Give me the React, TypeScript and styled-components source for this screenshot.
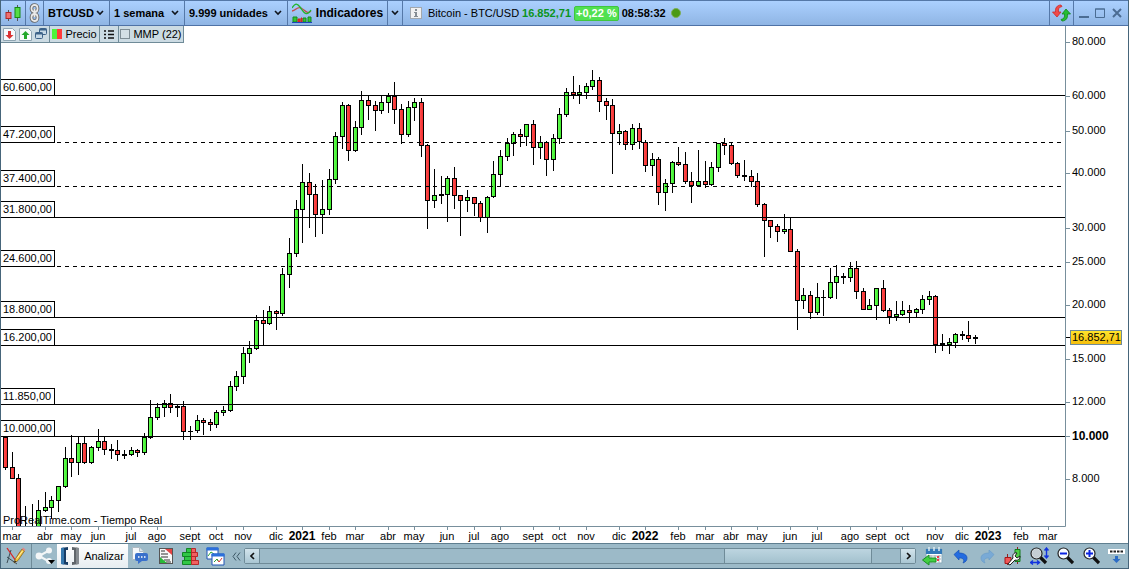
import React from "react";
import styled, { createGlobalStyle, css } from "styled-components";

const GlobalStyle = createGlobalStyle`
  * { box-sizing: border-box; }
  body { margin: 0; background: #fff; }
  body, button, select, input { font-family: "Liberation Sans", Arial, sans-serif; font-size: 11px; color: #000; }
`;

const Window = styled.main`
  display: flex;
  flex-direction: column;
  height: 100vh;
  min-width: 900px;
  border: solid #46657a;
  border-width: 0 1px 1px;
  background: #fff;
`;

const TopBar = styled.header`
  display: flex;
  flex: none;
  height: 26px;
  border-top: 1px solid #5578a8;
  border-bottom: 1px solid #4f72a6;
  background: linear-gradient(#abd0ff, #8fb5e4);
`;

const cell = css`
  display: flex;
  align-items: center;
  justify-content: center;
  flex: none;
  margin: 0;
  padding: 0;
  border: 0;
  background: none;
`;

const TopButton = styled.button<{ $width: number; $plain?: boolean; $large?: boolean }>`
  ${cell}
  width: ${(p) => p.$width}px;
  gap: 4px;
  border-right: ${(p) => (p.$plain ? "0" : "1px solid #5578a8")};
  font-weight: bold;
  font-size: ${(p) => (p.$large ? 12 : 11)}px;
`;

const Picker = styled.label<{ $width: number }>`
  display: grid;
  flex: none;
  align-items: center;
  width: ${(p) => p.$width}px;
  border-right: 1px solid #5578a8;
  > * { grid-area: 1 / 1; }
  > svg { justify-self: end; margin-right: 5px; pointer-events: none; }
`;

const PickerSelect = styled.select`
  appearance: none;
  width: 100%;
  height: 24px;
  padding: 0 0 0 4px;
  border: 0;
  background: none;
  font-weight: bold;
`;

const Quote = styled.div`
  display: flex;
  align-items: center;
  flex: 1;
  gap: 3px;
  padding-left: 7px;
  white-space: nowrap;
`;

const QuoteName = styled.span`
  padding-left: 3px;
`;

const QuotePrice = styled.strong`
  color: #0b9420;
`;

const QuoteChange = styled.strong`
  padding: 0 1px;
  border: 1px solid #3fc63f;
  border-radius: 2px;
  background: #51e151;
  color: #fff;
  line-height: 13px;
`;

const StatusDot = styled.span`
  width: 10px;
  height: 10px;
  margin-left: 2px;
  border: 1px solid #7fae5c;
  border-radius: 50%;
  background: #4b9a16;
`;

const WindowTools = styled.div`
  display: flex;
  border-left: 1px solid #5578a8;
`;

const ChartArea = styled.section`
  position: relative;
  flex: 1;
  min-height: 0;
`;

const ChartSvg = styled.svg`
  display: block;
  width: 100%;
  height: 100%;
  font-family: "Liberation Sans", Arial, sans-serif;
  font-size: 11px;
`;

const Legend = styled.div`
  position: absolute;
  top: 0;
  left: 0;
  display: flex;
  height: 17px;
  border-bottom: 1px solid #6f8b98;
  background: #ccdbe3;
`;

const LegendGroup = styled.div<{ $width: number }>`
  display: flex;
  align-items: center;
  justify-content: center;
  width: ${(p) => p.$width}px;
  border-right: 1px solid #6f8b98;
`;

const LegendButton = styled.button`
  ${cell}
  width: 16px;
`;

const LegendLabel = styled.label`
  display: flex;
  align-items: center;
  gap: 3px;
  white-space: nowrap;
`;

const LegendCheck = styled.input`
  appearance: none;
  width: 10px;
  height: 10px;
  margin: 0;
  border: 1px solid #7e8d95;
  background: #d3dfe5;
`;

const Swatch = styled.span`
  width: 10px;
  height: 10px;
  background: linear-gradient(90deg, #4cf53a 50%, #ff3a3a 50%);
`;

const BottomBar = styled.footer`
  display: flex;
  flex: none;
  align-items: center;
  height: 25px;
  border-top: 1px solid #5f7f90;
  background: #9cbac8;
`;

const BarButton = styled.button<{ $width: number; $divided?: boolean }>`
  ${cell}
  width: ${(p) => p.$width}px;
  height: 24px;
  border-right: ${(p) => (p.$divided ? "1px solid #6f8b98" : "0")};
`;

const AnalyzeButton = styled.button`
  ${cell}
  width: 71px;
  height: 24px;
  gap: 5px;
  background: linear-gradient(#fff, #e6edf1);
`;

const ScrollBar = styled.div`
  display: flex;
  flex: 1;
  min-width: 0;
  height: 16px;
  border: 1px solid #6f8b98;
  border-radius: 2px;
`;

const ScrollArrow = styled.button`
  ${cell}
  width: 14px;
  background: linear-gradient(#d2e4ec, #a9c6d3);
`;

const ScrollRange = styled.input`
  appearance: none;
  flex: 1;
  min-width: 0;
  height: 14px;
  margin: 0;
  border: solid #6f8b98;
  border-width: 0 1px;
  background: #9cbac8;
  &::-webkit-slider-thumb {
    appearance: none;
    width: 148px;
    height: 14px;
    border: solid #6f8b98;
    border-width: 0 1px;
    background: linear-gradient(#bdd5e0, #a3c1ce);
  }
`;

type Kind = "u" | "d" | "x";
type Candle = [x: number, high: number, top: number, bottom: number, low: number, kind: Kind];

// Weekly candles: "u" rises, "d" falls, "x" closes where it opened.
const candles: Candle[] = [
  [5, 436, 437, 467, 469, "d"], [12, 452, 467, 478, 478, "d"], [18, 474, 478, 540, 540, "d"],
  [25, 506, 530, 540, 540, "u"], [32, 504, 530, 540, 540, "d"], [38, 500, 510, 540, 540, "u"],
  [45, 492, 507, 510, 511, "u"], [51, 496, 500, 507, 518, "u"], [58, 486, 486, 500, 511, "u"],
  [65, 447, 458, 486, 487, "u"], [71, 435, 458, 462, 476, "d"], [78, 437, 443, 462, 474, "u"],
  [84, 437, 443, 462, 463, "d"], [91, 446, 447, 462, 463, "u"], [98, 429, 441, 447, 450, "u"],
  [104, 437, 441, 449, 454, "d"], [111, 444, 449, 450, 458, "x"], [117, 440, 450, 454, 460, "d"],
  [124, 450, 454, 455, 458, "x"], [131, 447, 450, 454, 455, "u"], [137, 449, 450, 452, 456, "d"],
  [144, 433, 437, 452, 454, "u"], [150, 400, 417, 437, 438, "u"], [157, 403, 407, 417, 419, "u"],
  [164, 400, 403, 407, 416, "u"], [170, 394, 403, 407, 412, "d"], [177, 404, 406, 407, 416, "x"],
  [183, 401, 406, 431, 439, "d"], [190, 426, 431, 431, 439, "x"], [197, 415, 420, 430, 432, "u"],
  [203, 418, 420, 422, 434, "d"], [210, 419, 422, 424, 430, "d"], [216, 410, 412, 424, 427, "u"],
  [223, 406, 410, 412, 415, "u"], [230, 381, 386, 410, 411, "u"], [236, 371, 376, 386, 390, "u"],
  [243, 347, 353, 376, 383, "u"], [249, 341, 348, 353, 362, "u"], [256, 315, 320, 348, 349, "u"],
  [263, 310, 320, 323, 344, "d"], [269, 306, 311, 323, 324, "u"], [276, 310, 311, 313, 329, "d"],
  [282, 268, 274, 313, 315, "u"], [289, 238, 253, 274, 287, "u"], [296, 200, 209, 253, 256, "u"],
  [302, 164, 182, 209, 242, "u"], [309, 173, 182, 194, 227, "d"], [315, 184, 194, 214, 236, "d"],
  [322, 180, 209, 214, 233, "u"], [329, 169, 179, 209, 214, "u"], [335, 132, 136, 179, 183, "u"],
  [342, 102, 105, 136, 148, "u"], [348, 104, 105, 150, 160, "d"], [355, 121, 127, 150, 151, "u"],
  [361, 91, 100, 127, 134, "u"], [368, 96, 100, 105, 119, "d"], [375, 101, 105, 110, 130, "d"],
  [381, 96, 102, 110, 113, "u"], [388, 93, 96, 102, 112, "u"], [394, 82, 96, 109, 123, "d"],
  [401, 104, 109, 134, 143, "d"], [408, 101, 107, 134, 136, "u"], [414, 98, 102, 107, 120, "u"],
  [421, 98, 102, 145, 156, "d"], [427, 144, 145, 200, 228, "d"], [434, 169, 195, 200, 207, "u"],
  [441, 176, 194, 195, 203, "x"], [447, 176, 178, 194, 221, "u"], [454, 167, 178, 195, 208, "d"],
  [460, 195, 195, 200, 235, "d"], [467, 190, 197, 200, 211, "u"], [474, 197, 197, 203, 215, "d"],
  [480, 201, 203, 217, 221, "d"], [487, 196, 197, 217, 232, "u"], [493, 161, 174, 196, 197, "u"],
  [500, 150, 156, 174, 186, "u"], [507, 138, 143, 156, 160, "u"], [513, 132, 134, 143, 155, "u"],
  [520, 129, 134, 136, 146, "d"], [526, 124, 124, 136, 145, "u"], [533, 120, 124, 147, 164, "d"],
  [540, 136, 142, 147, 158, "u"], [546, 141, 142, 159, 175, "d"], [553, 134, 138, 159, 170, "u"],
  [559, 108, 114, 138, 143, "u"], [566, 88, 92, 114, 116, "u"], [573, 76, 92, 94, 98, "d"],
  [579, 85, 92, 94, 103, "u"], [586, 83, 86, 92, 98, "u"], [592, 70, 80, 86, 89, "u"],
  [599, 77, 80, 101, 111, "d"], [606, 98, 101, 105, 119, "d"], [612, 99, 105, 133, 173, "d"],
  [619, 124, 131, 133, 144, "u"], [625, 130, 131, 144, 149, "d"], [632, 124, 128, 144, 149, "u"],
  [639, 123, 128, 141, 148, "d"], [645, 140, 142, 165, 171, "d"], [652, 153, 159, 165, 175, "u"],
  [658, 157, 159, 192, 204, "d"], [665, 179, 183, 192, 210, "u"], [672, 161, 162, 183, 192, "u"],
  [678, 147, 162, 164, 165, "d"], [685, 152, 164, 181, 183, "d"], [691, 172, 181, 185, 202, "d"],
  [698, 150, 181, 185, 186, "u"], [705, 161, 181, 184, 187, "d"], [711, 162, 167, 184, 185, "u"],
  [718, 143, 143, 167, 171, "u"], [724, 138, 143, 145, 154, "d"], [731, 143, 145, 163, 164, "d"],
  [737, 162, 163, 175, 177, "d"], [744, 160, 175, 176, 180, "x"], [751, 170, 176, 181, 186, "d"],
  [757, 173, 181, 204, 206, "d"], [764, 203, 204, 220, 256, "d"], [770, 220, 220, 226, 237, "d"],
  [777, 224, 226, 231, 241, "d"], [784, 214, 229, 231, 233, "u"], [790, 217, 229, 251, 251, "d"],
  [797, 249, 251, 300, 329, "d"], [803, 288, 295, 300, 308, "u"], [810, 291, 295, 312, 318, "d"],
  [817, 283, 297, 312, 314, "u"], [823, 290, 297, 297, 315, "x"], [830, 268, 282, 297, 298, "u"],
  [836, 265, 276, 282, 298, "u"], [843, 273, 276, 277, 283, "x"], [850, 262, 268, 277, 281, "u"],
  [856, 261, 268, 291, 298, "d"], [863, 288, 291, 309, 309, "d"], [869, 299, 305, 309, 309, "u"],
  [876, 288, 288, 305, 319, "u"], [883, 280, 288, 310, 311, "d"], [889, 308, 310, 316, 323, "d"],
  [896, 301, 314, 316, 320, "u"], [902, 301, 310, 314, 315, "u"], [909, 305, 310, 312, 322, "d"],
  [916, 308, 309, 312, 316, "u"], [922, 295, 299, 309, 313, "u"], [929, 291, 296, 299, 304, "u"],
  [935, 295, 296, 344, 352, "d"], [942, 334, 343, 344, 350, "x"], [949, 338, 342, 344, 353, "u"],
  [955, 333, 334, 342, 347, "u"], [962, 331, 334, 335, 339, "x"], [968, 321, 335, 338, 341, "d"],
  [975, 335, 337, 338, 343, "x"],
];

const levels: { y: number; label: string; dashed?: boolean }[] = [
  { y: 95, label: "60.600,00" },
  { y: 142, label: "47.200,00", dashed: true },
  { y: 186, label: "37.400,00", dashed: true },
  { y: 217, label: "31.800,00" },
  { y: 266, label: "24.600,00", dashed: true },
  { y: 317, label: "18.800,00" },
  { y: 345, label: "16.200,00" },
  { y: 404, label: "11.850,00" },
  { y: 436, label: "10.000,00" },
];

const prices: [number, string][] = [
  [42, "80.000"], [96, "60.000"], [131, "50.000"], [173, "40.000"], [228, "30.000"], [262, "25.000"],
  [305, "20.000"], [359, "15.000"], [402, "12.000"], [436, "10.000"], [479, "8.000"],
];

const months: [number, string][] = [
  [12, "mar"], [45, "abr"], [71, "may"], [98, "jun"], [131, "jul"], [157, "ago"], [190, "sept"],
  [216, "oct"], [243, "nov"], [276, "dic"], [302, "2021"], [329, "feb"], [355, "mar"], [388, "abr"],
  [414, "may"], [447, "jun"], [474, "jul"], [500, "ago"], [533, "sept"], [559, "oct"], [586, "nov"],
  [619, "dic"], [645, "2022"], [678, "feb"], [705, "mar"], [731, "abr"], [757, "may"], [790, "jun"],
  [817, "jul"], [850, "ago"], [876, "sept"], [902, "oct"], [935, "nov"], [962, "dic"], [988, "2023"],
  [1021, "feb"], [1048, "mar"],
];

function Chart() {
  return (
    <ChartSvg viewBox="1 26 1127 517" role="img" aria-label="Bitcoin - BTC/USD">
      <defs>
        <linearGradient id="up"><stop offset="0" stopColor="#66ff55" /><stop offset="1" stopColor="#3ceb28" /></linearGradient>
        <linearGradient id="down"><stop offset="0" stopColor="#ff4d4d" /><stop offset="1" stopColor="#f22f2f" /></linearGradient>
        <linearGradient id="last" x2="0" y2="1"><stop offset="0" stopColor="#ffe62e" /><stop offset="1" stopColor="#f5bd0a" /></linearGradient>
        <clipPath id="plot"><rect x="1" y="26" width="1064" height="500" /></clipPath>
      </defs>
      <g clipPath="url(#plot)" shapeRendering="crispEdges">
        {candles.map(([x, high, top, bottom, low, kind]) => (
          <g key={x}>
            <rect x={x} y={high} width="1" height={low - high + 1} />
            <rect x={x - 2} y={top} width="5" height={bottom - top + 1} />
            {kind !== "x" && (
              <rect x={x - 1} y={top + 1} width="3" height={bottom - top - 1} fill={kind === "u" ? "url(#up)" : "url(#down)"} />
            )}
          </g>
        ))}
      </g>
      {levels.map((l) => (
        <g key={l.y}>
          <path d={`M${l.dashed ? 57 : 1} ${l.y + 0.5}H1065`} stroke="#000" strokeDasharray={l.dashed ? "4 4" : undefined} />
          <rect x="0.5" y={l.y - 15.5} width="54" height="16" fill="#fff" stroke="#000" />
          <text x="3" y={l.y - 4}>{l.label}</text>
        </g>
      ))}
      <text x="3" y="524">ProRealTime.com - Tiempo Real</text>
      <path d="M1 526.5H1065.5V26" fill="none" stroke="#788f9c" />
      {prices.map(([y, label]) => {
        const main = label === "10.000";
        return (
          <g key={y}>
            <path d={`M1066 ${y + 0.5}h4`} stroke="#788f9c" />
            <text x="1072" y={y + (main ? 4 : 3)} fontSize={main ? 12 : 11} fontWeight={main ? "bold" : "normal"}>{label}</text>
          </g>
        );
      })}
      <path d="M1066 337.5h4" stroke="#000" />
      <rect x="1070.5" y="330.5" width="51" height="14" fill="url(#last)" stroke="#6f8b98" />
      <text x="1072" y="341">16.852,71</text>
      {months.map(([x, label]) => {
        const year = label.startsWith("20");
        return (
          <g key={x}>
            <path d={`M${x + 0.5} 527v3`} stroke="#788f9c" />
            <text x={x} y="540" textAnchor="middle" fontSize={year ? 12 : 11} fontWeight={year ? "bold" : "normal"}>{label}</text>
          </g>
        );
      })}
    </ChartSvg>
  );
}

const Chevron = () => (
  <svg width="8" height="6" viewBox="0 0 8 6"><path d="M1 1l3 3 3-3" fill="none" stroke="#10151c" strokeWidth="1.6" /></svg>
);

const CandlesIcon = () => (
  <svg width="17" height="18" viewBox="0 0 17 18">
    <path d="M3.500 6v11M12.500 1v16" stroke="#555" />
    <rect x="1" y="8.500" width="5" height="6" fill="#f07070" stroke="#b02828" />
    <rect x="10" y="3.500" width="5" height="10" fill="#55dd45" stroke="#168a16" />
  </svg>
);

const LinkIcon = () => (
  <svg width="11" height="20" viewBox="0 0 11 20" fill="none">
    <g stroke="#666" strokeWidth="3.600"><rect x="2.500" y="2" width="6" height="7" rx="3" /><rect x="2.500" y="11" width="6" height="7" rx="3" /><path d="M5.500 6v8" /></g>
    <g stroke="#e9e9e9" strokeWidth="1.800"><rect x="2.500" y="2" width="6" height="7" rx="3" /><rect x="2.500" y="11" width="6" height="7" rx="3" /><path d="M5.500 6v8" /></g>
  </svg>
);

const IndicatorIcon = () => (
  <svg width="20" height="20" viewBox="0 0 20 20" fill="none">
    <path d="M0 8C4 8 5 3 9 5s6 7 10 3" stroke="#c44b4b" strokeWidth="1.300" />
    <path d="M0 5C3 0 5 0 8 4s6 11 11 3" stroke="#21b52c" strokeWidth="1.300" />
    <path d="M1 14h4v5H1zM11 15h3v4h-3zM16 14h3v5h-3z" fill="#35c435" stroke="#138a20" />
    <path d="M6 16h2v3H6zM9 15h1v4H9z" fill="#e33" stroke="#c22" />
    <path d="M0 19.500h20" stroke="#1d46bb" />
  </svg>
);

const InfoIcon = () => (
  <svg width="12" height="12" viewBox="0 0 12 12">
    <rect x=".5" y=".5" width="11" height="11" fill="#f1f1f1" stroke="#a2a8ae" />
    <path d="M5 2h2v2H5zM4 5h3v4h1v1H4V9h1V6H4z" fill="#858c93" />
  </svg>
);

const SyncIcon = () => (
  <svg width="19" height="18" viewBox="0 0 19 18">
    <path d="M9 1C5 1 3 4 3.500 8H.5l4.500 5 4-5H6.500C6 5 7 3 10 2.500z" fill="#f04a4a" stroke="#c92b2b" strokeWidth=".8" />
    <path d="M10 17c4 0 6-3 5.500-7h3L14 5l-4 5h2.500c.5 3-.5 5-3.500 5.500z" fill="#25bd32" stroke="#12861c" strokeWidth=".8" />
  </svg>
);

const MinIcon = () => <svg width="10" height="12"><path d="M0 10h10" stroke="#4b6c93" strokeWidth="2" /></svg>;
const MaxIcon = () => <svg width="10" height="10"><path d="M.5 1h9v8.500h-9zM0 1h10" fill="none" stroke="#4b6c93" /></svg>;
const CloseIcon = () => <svg width="10" height="10"><path d="M1 1l8 8M9 1L1 9" stroke="#4b6c93" strokeWidth="2" /></svg>;

const SheetArrow = ({ up }: { up?: boolean }) => (
  <svg width="13" height="13" viewBox="0 0 13 13">
    <path d="M.5.5h9l3 3v9H.5z" fill="#f6fafc" stroke="#8fa5b2" />
    <path d={up ? "M5 11V7H2.500l4-4 4 4H8v4z" : "M5 3v4H2.500l4 4 4-4H8V3z"} fill={up ? "#22a72c" : "#d93232"} />
  </svg>
);

const CascadeIcon = () => (
  <svg width="12" height="12" viewBox="0 0 12 12" fill="#c6d9e7" stroke="#3c6288">
    <rect x="4.500" y=".5" width="7" height="6" rx="1" /><path d="M4.500 1.500h7" strokeWidth="2" />
    <rect x=".5" y="4.500" width="7" height="6" rx="1" /><path d="M.5 5.500h7" strokeWidth="2" />
  </svg>
);

const ListIcon = () => (
  <svg width="10" height="9"><path d="M0 1h2M0 4.500h2M0 8h2M4 1h6M4 4.500h6M4 8h6" stroke="#111" strokeWidth="1.400" /></svg>
);

const DrawIcon = () => (
  <svg width="20" height="18" viewBox="0 0 20 18" fill="none">
    <path d="M1 16L5 3M1 10l10 7" stroke="#3c4c55" />
    <path d="M1 1l9 13 4-9" stroke="#d92626" strokeWidth="1.300" />
    <path d="M8 16l1.500-4.500L16 2l2.500 2L12 13.500z" fill="#f2c43b" stroke="#85642a" strokeWidth=".8" />
    <path d="M16 2l1-1.500 2.500 2-1 1.500z" fill="#e68686" /><path d="M8 16l.8-2.400 1.500 1z" fill="#222" />
    <path d="M11 11.500L16.500 4" stroke="#fff2ae" />
  </svg>
);

const ShareIcon = () => (
  <svg width="20" height="18" viewBox="0 0 20 18">
    <path d="M14 3.500L4 9l10 5.500" fill="none" stroke="#f3f6f7" strokeWidth="2" />
    <g fill="#f3f6f7"><circle cx="14" cy="3.500" r="3" /><circle cx="4" cy="9" r="3.400" /><circle cx="14" cy="14" r="3" /></g>
    <path d="M13 13h7l-3.500 4z" fill="#000" />
  </svg>
);

const BracketIcon = () => (
  <svg width="18" height="18" viewBox="0 0 18 18">
    <path d="M0 1l7-1v3H5v12h2v3l-7-1z" fill="#173d66" /><path d="M0 1l3-.5v17L0 17z" fill="#3577ad" />
    <path d="M18 1l-7-1v3h2v12h-2v3l7-1z" fill="#5f656a" /><path d="M18 1l-3-.5v17l3-.5z" fill="#858b90" />
  </svg>
);

const ChatIcon = () => (
  <svg width="17" height="18" viewBox="0 0 17 18">
    <path d="M.5.500h7l4 4v8H.5z" fill="#f4f7fa" stroke="#aebac2" /><path d="M7.500.500v4h4" fill="#dbe4ea" stroke="#aebac2" />
    <path d="M5 6h9q2 0 2 2v4q0 2-2 2h-4l-4 3v-3H5q-2 0-2-2V8q0-2 2-2z" fill="#3a70cb" />
    <path d="M6 10h1.500M9 10h1.500M12 10h1.500" stroke="#fff" strokeWidth="1.500" />
  </svg>
);

const OrdersIcon = () => (
  <svg width="14" height="17" viewBox="0 0 14 17">
    <rect x=".5" y=".5" width="13" height="15" fill="#f8f8f8" stroke="#555" />
    <path d="M2 3h4M2 6h7M2 9h7M5 12h6M7 14h5" stroke="#333" />
    <path d="M6 1h7v6z" fill="#e54343" /><path d="M1 15V9l7 6z" fill="#28b938" />
  </svg>
);

const DepthIcon = () => (
  <svg width="17" height="17" viewBox="0 0 17 17">
    <g fill="#30c746" stroke="#128525"><path d="M4.500.5h5v4h-5zM.5 4.500h9v4h-9zM2.500 8.500h7v4h-7zM.5 12.500h9v4h-9z" /></g>
    <g fill="#f06161" stroke="#b62a2a"><path d="M9.500.5h4v4h-4zM9.500 4.500h6v4h-6zM9.500 8.500h4v4h-4zM9.500 12.500h7v4h-7z" /></g>
  </svg>
);

const WindowsIcon = () => (
  <svg width="19" height="19" viewBox="0 0 19 19" fill="none">
    <path d="M1 1h11v11H1z" fill="#fff" stroke="#1f55b5" /><path d="M.5 2h12" stroke="#2b6fdc" strokeWidth="3" />
    <path d="M2 9l3-4 3 2" stroke="#2aa336" />
    <path d="M6 7h12v11H6z" fill="#fff" stroke="#1f55b5" /><path d="M5.500 8h13" stroke="#2b6fdc" strokeWidth="3" />
    <path d="M8 15l3-3 2 3 3-4" stroke="#d93434" /><path d="M8 15l3-3 1 2" stroke="#2aa336" />
  </svg>
);

const CollapseIcon = () => <svg width="9" height="9"><path d="M4 .5l-3 4 3 4M8 .5l-3 4 3 4" fill="none" stroke="#3e5967" /></svg>;
const ArrowIcon = ({ right }: { right?: boolean }) => (
  <svg width="5" height="8"><path d={right ? "M1 1l3 3-3 3" : "M4 1L1 4l3 3"} fill="none" stroke="#111" strokeWidth="1.600" /></svg>
);

const CalendarIcon = () => (
  <svg width="21" height="19" viewBox="0 0 21 19">
    <path d="M4 2h16v14H4z" fill="#fff" stroke="#8ab" /><path d="M4 2h16v5H4z" fill="#3379b9" />
    <path d="M7 0v4M12 0v4M17 0v4" stroke="#dceaf2" strokeWidth="1.500" />
    <path d="M6 9h13M6 12h13M9 8v8M13 8v8M17 8v8" stroke="#a9b4bb" />
    <path d="M15 9h2v2h-2zM15 12h2v2h-2z" fill="#ec3b4f" />
    <path d="M.5 13L7 8v3h7v4H7v3z" fill="#42cf43" stroke="#188e25" />
  </svg>
);

const UndoIcon = ({ faded }: { faded?: boolean }) => (
  <svg width="16" height="15" viewBox="0 0 16 15">
    <path
      transform={faded ? "matrix(-1 0 0 1 16 0)" : undefined}
      d="M1 5.500L6 1v3c5 0 8 2 8 5 0 2-1 4-4 5 1-2 1-3 0-4-1-1-2-1-4-1v2z"
      fill={faded ? "#79aad6" : "#246ce0"} stroke={faded ? "#6b9dc8" : "#1650b5"} strokeWidth=".7"
    />
  </svg>
);

const SettingsIcon = () => (
  <svg width="18" height="19" viewBox="0 0 18 19">
    <path d="M3.500 7v11M13.500 0v17" stroke="#8f2020" />
    <path d="M1 10.500h6v6H1z" fill="#ef5757" stroke="#a61717" /><path d="M11 2.500h5v12h-5z" fill="#4fce45" stroke="#147b1d" />
    <path d="M4 17l5-6c-1-3 1-6 4-5l-2 3 2 2 3-2c0 3-2 5-5 4l-5 5z" fill="#fff" stroke="#222" />
  </svg>
);

const Lens = ({ sign }: { sign?: string }) => (
  <>
    <path d="M10 10l6 6" stroke="#111" strokeWidth="3.200" />
    <circle cx="6.500" cy="6.500" r="5.500" fill="#f7fbff" stroke="#222" strokeWidth="1.200" />
    {sign && <path d={sign} stroke="#0a22e0" strokeWidth="2" />}
  </>
);

const ZoomIcon = ({ plus }: { plus?: boolean }) => (
  <svg width="17" height="18" viewBox="0 0 17 18"><Lens sign={plus ? "M3 6.500h7M6.500 3v7" : "M3 6.500h7"} /></svg>
);

const FitIcon = () => (
  <svg width="19" height="18" viewBox="0 0 19 18">
    <Lens />
    <circle cx="6.500" cy="6.500" r="4.500" fill="#c5ced4" />
    <path d="M16.500 1v10M14.500 3.500l2-2.500 2 2.500M14.500 8.500l2 2.500 2-2.500M.5 15.500h9M3 13.500L.5 15.500 3 17.500M7 13.500l2.500 2L7 17.500" fill="none" stroke="#1233df" strokeWidth="1.400" />
  </svg>
);

const DockIcon = () => (
  <svg width="17" height="14" viewBox="0 0 17 14">
    <path d="M0 0h17v5H0z" fill="#fff" /><path d="M2 2.500h13" stroke="#222" strokeWidth="2" strokeDasharray="2.500 1" />
    <path d="M7 7h3v3h2.500L8.500 14l-4-4H7z" fill="#2c6cc5" />
  </svg>
);

function Dropdown({ label, value, width }: { label: string; value: string; width: number }) {
  return (
    <Picker $width={width}>
      <PickerSelect aria-label={label} defaultValue={value}><option>{value}</option></PickerSelect>
      <Chevron />
    </Picker>
  );
}

export default function App() {
  return (
    <>
      <GlobalStyle />
      <Window>
        <TopBar>
          <TopButton $width={25} aria-label="Gráfico"><CandlesIcon /></TopButton>
          <TopButton $width={18} aria-label="Enlazar"><LinkIcon /></TopButton>
          <Dropdown label="Valor" value="BTCUSD" width={66} />
          <Dropdown label="Periodo" value="1 semana" width={75} />
          <Dropdown label="Unidades" value="9.999 unidades" width={103} />
          <TopButton $width={100} $large><IndicatorIcon />Indicadores</TopButton>
          <TopButton $width={15} aria-label="Más indicadores"><Chevron /></TopButton>
          <Quote>
            <InfoIcon />
            <QuoteName>Bitcoin - BTC/USD</QuoteName>
            <QuotePrice>16.852,71</QuotePrice>
            <QuoteChange>+0,22 %</QuoteChange>
            <strong>08:58:32</strong>
            <StatusDot />
          </Quote>
          <WindowTools>
            <TopButton $width={24} aria-label="Sincronizar"><SyncIcon /></TopButton>
            <TopButton $width={20} $plain aria-label="Minimizar"><MinIcon /></TopButton>
            <TopButton $width={12} $plain aria-label="Maximizar"><MaxIcon /></TopButton>
            <TopButton $width={22} $plain aria-label="Cerrar"><CloseIcon /></TopButton>
          </WindowTools>
        </TopBar>
        <ChartArea>
          <Chart />
          <Legend>
            <LegendGroup $width={49}>
              <LegendButton aria-label="Bajar"><SheetArrow /></LegendButton>
              <LegendButton aria-label="Subir"><SheetArrow up /></LegendButton>
              <LegendButton aria-label="Separar"><CascadeIcon /></LegendButton>
            </LegendGroup>
            <LegendGroup $width={50}><LegendLabel as="span"><Swatch />Precio</LegendLabel></LegendGroup>
            <LegendGroup $width={19}><LegendButton aria-label="Lista"><ListIcon /></LegendButton></LegendGroup>
            <LegendGroup $width={65}><LegendLabel><LegendCheck type="checkbox" />MMP (22)</LegendLabel></LegendGroup>
          </Legend>
        </ChartArea>
        <BottomBar>
          <BarButton $width={31} $divided aria-label="Dibujar"><DrawIcon /></BarButton>
          <BarButton $width={25} aria-label="Compartir"><ShareIcon /></BarButton>
          <AnalyzeButton><BracketIcon />Analizar</AnalyzeButton>
          <BarButton $width={25} aria-label="Comentarios"><ChatIcon /></BarButton>
          <BarButton $width={25} aria-label="Órdenes"><OrdersIcon /></BarButton>
          <BarButton $width={25} aria-label="Profundidad"><DepthIcon /></BarButton>
          <BarButton $width={25} aria-label="Ventanas"><WindowsIcon /></BarButton>
          <BarButton $width={16} aria-label="Contraer"><CollapseIcon /></BarButton>
          <ScrollBar>
            <ScrollArrow aria-label="Atrás"><ArrowIcon /></ScrollArrow>
            <ScrollRange type="range" min={0} max={494} defaultValue={466} aria-label="Desplazamiento" />
            <ScrollArrow aria-label="Adelante"><ArrowIcon right /></ScrollArrow>
          </ScrollBar>
          <BarButton $width={32} aria-label="Ir a fecha"><CalendarIcon /></BarButton>
          <BarButton $width={26} aria-label="Deshacer"><UndoIcon /></BarButton>
          <BarButton $width={26} aria-label="Rehacer"><UndoIcon faded /></BarButton>
          <BarButton $width={26} aria-label="Configurar"><SettingsIcon /></BarButton>
          <BarButton $width={26} aria-label="Ajustar"><FitIcon /></BarButton>
          <BarButton $width={26} aria-label="Alejar"><ZoomIcon /></BarButton>
          <BarButton $width={26} aria-label="Acercar"><ZoomIcon plus /></BarButton>
          <BarButton $width={24} aria-label="Acoplar"><DockIcon /></BarButton>
        </BottomBar>
      </Window>
    </>
  );
}
